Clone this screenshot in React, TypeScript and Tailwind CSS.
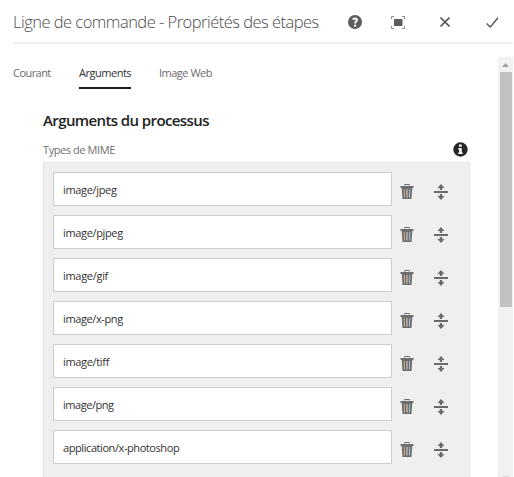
import React from "react";

const types: { name: string; tracking: string }[] = [
  { name: "image/jpeg", tracking: "tracking-[-0.33px]" },
  { name: "image/pjpeg", tracking: "tracking-[-0.35px]" },
  { name: "image/gif", tracking: "tracking-[-0.3px]" },
  { name: "image/x-png", tracking: "tracking-[-0.38px]" },
  { name: "image/tiff", tracking: "tracking-[-0.33px]" },
  { name: "image/png", tracking: "tracking-[-0.46px]" },
  { name: "application/x-photoshop", tracking: "tracking-[-0.42px]" },
];

function HelpIcon() {
  return (
    <svg width="14" height="14" viewBox="0 0 14 14" className="block">
      <circle cx="7" cy="7" r="7" fill="#5c5c5c" />
      <path d="M4.900 4.600C5.500 3.200 9 3.200 9 5.100C9 6.500 7.100 6.600 7.100 8.400" fill="none" stroke="#fff" strokeWidth="2" />
      <circle cx="7.100" cy="10.600" r="1.200" fill="#fff" />
    </svg>
  );
}

function FullScreenIcon() {
  return (
    <svg width="14" height="13" viewBox="0 0 14 13" className="block">
      <path d="M3 .5H.5V3M11 .5h2.500V3M.5 10v2.500H3M13.500 10v2.500H11" fill="none" stroke="#8a8a8a" />
      <rect x="3" y="3" width="8.500" height="7" fill="#5c5c5c" />
    </svg>
  );
}

function CloseIcon() {
  return (
    <svg width="10" height="10" viewBox="0 0 10 10" className="block">
      <path d="M.5.5l9 9M9.500.5l-9 9" stroke="#5c5c5c" strokeWidth="1.6" />
    </svg>
  );
}

function CheckIcon() {
  return (
    <svg width="13" height="11" viewBox="0 0 13 11" className="block">
      <path d="M.7 6.500L4.300 10L12 .8" fill="none" stroke="#5c5c5c" strokeWidth="1.5" />
    </svg>
  );
}

function InfoIcon() {
  return (
    <svg width="15" height="15" viewBox="0 0 15 15" className="block">
      <circle cx="7.500" cy="7.500" r="7.200" fill="#262626" />
      <path d="M6 2.600h2.700v2.200H6zM5.300 6h3.400v4.500h1v1.400H5.200v-1.400h1V7.400h-.9z" fill="#fff" />
    </svg>
  );
}

function TrashIcon() {
  return (
    <svg width="14" height="16" viewBox="0 0 14 16" className="block">
      <path d="M4.500 2.500V1.500h5v1" fill="none" stroke="#6e6e6e" />
      <path d="M.5 3h13v2H.5z" fill="#6e6e6e" />
      <path d="M1.700 5h10.600L11.500 16h-9z" fill="#6e6e6e" />
      <path d="M4.200 6l.4 8.500" stroke="#d9a878" strokeWidth="1" />
      <path d="M7 6v8.500" stroke="#d5d0ca" strokeWidth="1" />
      <path d="M9.800 6l-.4 8.500" stroke="#a9c6da" strokeWidth="1" />
    </svg>
  );
}

function MoveIcon() {
  return (
    <svg width="14" height="16" viewBox="0 0 14 16" className="block">
      <path d="M0 7h14v2H0zM7 0l3.500 4H8.200V6H5.800V4H3.500zM7 16l3.500-4H8.200V10H5.800v2H3.500z" fill="#6b6b6b" />
    </svg>
  );
}

export default function App() {
  return (
    <div className="flex h-[477px] w-[514px] flex-col overflow-hidden bg-white font-['Open_Sans','Noto_Sans',sans-serif] text-[#4b4b4b]">
      <header className="ml-[13px] mr-px flex h-11 shrink-0 items-center border-b-2 border-[#f0f0f0]">
        <h1 className="w-[335px] whitespace-nowrap pt-px text-[16.500px] font-light leading-6 tracking-[-0.52px] text-[#4b4b4b]">
          <span>Ligne de commande - Propriétés des étapes</span>
        </h1>
        <div className="flex items-center pt-[2px]">
          <HelpIcon />
          <div className="ml-[29px]"><FullScreenIcon /></div>
          <div className="ml-[35px]"><CloseIcon /></div>
          <div className="ml-[36px]"><CheckIcon /></div>
        </div>
      </header>
      <div className="flex min-h-0 flex-1 pt-[13px]">
        <main className="w-[498px] overflow-hidden">
          <nav className="ml-[13px] flex h-8 whitespace-nowrap text-[11px] leading-8 text-[#6b6b6b]">
            <div className="w-[66px]"><span className="tracking-[-0.55px]">Courant</span></div>
            <div className="mr-7 w-[52px] border-b-2 border-[#1e1e1e] text-[#323232]"><span className="tracking-[-0.48px]">Arguments</span></div>
            <div><span className="tracking-[-0.5px]">Image Web</span></div>
          </nav>
          <section className="ml-[43px] w-[427px]">
            <h2 className="mt-[19px] h-6 whitespace-nowrap text-[15px] font-semibold leading-6 tracking-[-0.6px] text-[#222]">
              <span>Arguments du processus</span>
            </h2>
            <div className="mt-[10px] flex h-5 items-start justify-between whitespace-nowrap text-[11px] leading-4 text-[#707070]">
              <span className="tracking-[-0.42px]">Types de MIME</span>
              <div className="mr-[2px]"><InfoIcon /></div>
            </div>
            <div className="flex h-[340px] flex-col gap-[9px] border border-[#e5e5e5] bg-[#efefef] pl-[9px] pt-[9px]">
              {types.map((type) => (
                <div key={type.name} className="flex h-[34px] shrink-0">
                  <div className="w-[339px] whitespace-nowrap border border-[#cdcdcd] bg-white pl-[9px] text-[11px] leading-[34px] text-[#323232]">
                    <span className={type.tracking}>{type.name}</span>
                  </div>
                  <div className="ml-[8px] mt-[11px]"><TrashIcon /></div>
                  <div className="ml-[20px] mt-[12px]"><MoveIcon /></div>
                </div>
              ))}
            </div>
          </section>
        </main>
        <aside className="flex w-[15px] flex-col items-center bg-[#f1f1f1]">
          <div className="flex h-[15px] shrink-0 items-center">
            <svg width="7" height="4" viewBox="0 0 7 4"><path d="M3.500 0L7 4H0z" fill="#a0a0a0" /></svg>
          </div>
          <div className="mb-auto h-[235px] w-3 bg-[#c1c1c1]" />
          <div className="h-px w-[6px] bg-[#d6d6d6]" />
        </aside>
      </div>
    </div>
  );
}
